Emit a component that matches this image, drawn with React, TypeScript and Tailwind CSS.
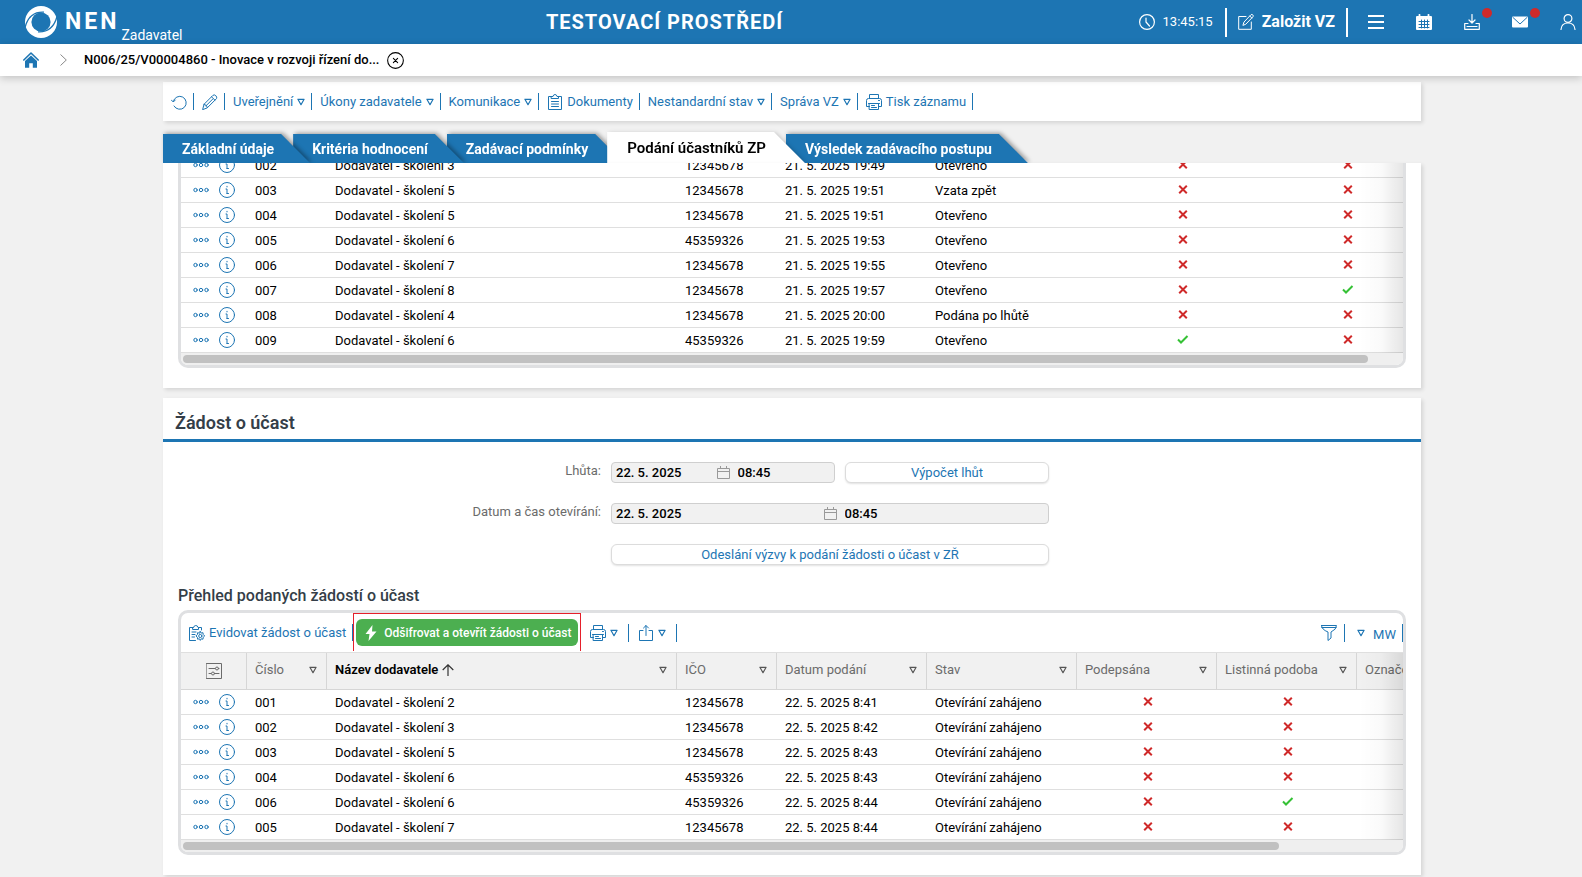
import type { ReactNode } from 'react';
import clsx from 'clsx';

interface Submission {
  no: string;
  supplier: string;
  ico: string;
  date: string;
  state: string;
  signed: boolean;
  paper: boolean;
}

const PRELIMINARY: Submission[] = [
  { no: '002', supplier: 'Dodavatel - školení 3', ico: '12345678', date: '21. 5. 2025 19:49', state: 'Otevřeno', signed: false, paper: false },
  { no: '003', supplier: 'Dodavatel - školení 5', ico: '12345678', date: '21. 5. 2025 19:51', state: 'Vzata zpět', signed: false, paper: false },
  { no: '004', supplier: 'Dodavatel - školení 5', ico: '12345678', date: '21. 5. 2025 19:51', state: 'Otevřeno', signed: false, paper: false },
  { no: '005', supplier: 'Dodavatel - školení 6', ico: '45359326', date: '21. 5. 2025 19:53', state: 'Otevřeno', signed: false, paper: false },
  { no: '006', supplier: 'Dodavatel - školení 7', ico: '12345678', date: '21. 5. 2025 19:55', state: 'Otevřeno', signed: false, paper: false },
  { no: '007', supplier: 'Dodavatel - školení 8', ico: '12345678', date: '21. 5. 2025 19:57', state: 'Otevřeno', signed: false, paper: true },
  { no: '008', supplier: 'Dodavatel - školení 4', ico: '12345678', date: '21. 5. 2025 20:00', state: 'Podána po lhůtě', signed: false, paper: false },
  { no: '009', supplier: 'Dodavatel - školení 6', ico: '45359326', date: '21. 5. 2025 19:59', state: 'Otevřeno', signed: true, paper: false },
];

const REQUESTS: Submission[] = [
  { no: '001', supplier: 'Dodavatel - školení 2', ico: '12345678', date: '22. 5. 2025 8:41', state: 'Otevírání zahájeno', signed: false, paper: false },
  { no: '002', supplier: 'Dodavatel - školení 3', ico: '12345678', date: '22. 5. 2025 8:42', state: 'Otevírání zahájeno', signed: false, paper: false },
  { no: '003', supplier: 'Dodavatel - školení 5', ico: '12345678', date: '22. 5. 2025 8:43', state: 'Otevírání zahájeno', signed: false, paper: false },
  { no: '004', supplier: 'Dodavatel - školení 6', ico: '45359326', date: '22. 5. 2025 8:43', state: 'Otevírání zahájeno', signed: false, paper: false },
  { no: '006', supplier: 'Dodavatel - školení 6', ico: '45359326', date: '22. 5. 2025 8:44', state: 'Otevírání zahájeno', signed: false, paper: true },
  { no: '005', supplier: 'Dodavatel - školení 7', ico: '12345678', date: '22. 5. 2025 8:44', state: 'Otevírání zahájeno', signed: false, paper: false },
];

const HEADERS = ['Číslo', 'Název dodavatele', 'IČO', 'Datum podání', 'Stav', 'Podepsána', 'Listinná podoba', 'Označení'];

interface IconProps {
  children: ReactNode;
  className?: string;
}

function Icon({ children, className }: IconProps) {
  return (
    <svg
      viewBox="0 0 16 16"
      width="16"
      height="16"
      fill="none"
      stroke="currentColor"
      strokeLinecap="round"
      strokeLinejoin="round"
      className={clsx('shrink-0', className)}
      aria-hidden="true"
    >
      {children}
    </svg>
  );
}

function Logo() {
  return (
    <svg viewBox="0 0 32 32" width="32" height="32" className="shrink-0" aria-hidden="true">
      <circle cx="16" cy="16" r="16" fill="#fff" />
      <circle cx="16" cy="16" r="9.6" fill="#1d75b3" />
      <path d="M0 21.5C2.5 12 8.500 5.500 19 6.200" fill="none" stroke="#1d75b3" strokeWidth="1.300" />
      <path d="M32 10.500C29.500 20 23.500 26.500 13 25.800" fill="none" stroke="#1d75b3" strokeWidth="1.300" />
    </svg>
  );
}

function Triangle({ className }: { className?: string }) {
  return (
    <svg viewBox="0 0 8 8" width="8" height="8" fill="none" stroke="currentColor" strokeWidth="1.200" strokeLinejoin="round" className={clsx('shrink-0', className)} aria-hidden="true">
      <path d="M.9 1.300h6.200L4 6.700z" />
    </svg>
  );
}

function PrinterIcon() {
  return (
    <Icon>
      <path d="M3.500 4.500v-4h9v4M3.500 12.500h-3v-6q0-2 2-2h11q2 0 2 2v6h-3M3.500 9.500h9v6h-9zM2.500 9.500h11M5.500 11.500h3M5.500 13.500h5M12.500 6.500h1" />
    </Icon>
  );
}

function Mark({ ok }: { ok: boolean }) {
  return ok ? (
    <svg viewBox="0 0 12 9" width="12" height="9" fill="none" stroke="#35c135" strokeWidth="2" className="mx-auto block" role="img" aria-label="Ano">
      <path d="M1 4.500l3 3L10.500 1" />
    </svg>
  ) : (
    <svg viewBox="0 0 10 9" width="10" height="9" fill="none" stroke="#cf2a2a" strokeWidth="2" className="mx-auto block" role="img" aria-label="Ne">
      <path d="M1.200.8l7.600 7.400M8.800.8L1.200 8.200" />
    </svg>
  );
}

function ToolItem({ label, icon, menu }: { label?: string; icon?: ReactNode; menu?: boolean }) {
  return (
    <li className="flex h-[17px] items-center border-r border-[#1d75b3] pr-[6px] pl-2">
      <button type="button" className="flex items-center gap-1 whitespace-nowrap">
        {icon}
        {label}
        {menu && <Triangle />}
      </button>
    </li>
  );
}

function Tab({ label, active, className }: { label: string; active?: boolean; className?: string }) {
  return (
    <div
      className={clsx(
        'relative',
        active ? 'drop-shadow-[2px_1px_2px_rgba(0,0,0,0.2)]' : 'drop-shadow-[2px_-1px_2px_rgba(0,0,0,0.35)]',
        className,
      )}
    >
      <button
        type="button"
        role="tab"
        aria-selected={!!active}
        className={clsx(
          'block whitespace-nowrap',
          active
            ? 'h-[31px] bg-white pr-[39px] pl-5 text-[15px] font-semibold text-black [clip-path:polygon(0_0,calc(100%-31px)_0,100%_100%,0_100%)]'
            : 'h-[29px] bg-[#1d75b3] pr-9 pl-[19px] text-sm font-bold text-white [clip-path:polygon(0_0,calc(100%-29px)_0,100%_100%,0_100%)]',
        )}
      >
        {label}
      </button>
    </div>
  );
}

function Row({ item }: { item: Submission }) {
  const textCell = 'p-0 pt-[2px] pl-2';
  return (
    <tr className="h-[25px] [&>td]:border-b [&>td]:border-[#dfdfdf]">
      <td className="p-0">
        <div className="flex items-center gap-[10px] pl-3 text-[#1d75b3]">
          <button type="button" aria-label="Další akce">
            <Icon>
              <circle cx="2.500" cy="8" r="1.700" />
              <circle cx="8" cy="8" r="1.700" />
              <circle cx="13.500" cy="8" r="1.700" />
            </Icon>
          </button>
          <button type="button" aria-label="Detail">
            <Icon>
              <circle cx="8" cy="8" r="7.500" />
              <path d="M8 4.300v.6M7 7h1v4.500M8 11.500h1.500" />
            </Icon>
          </button>
        </div>
      </td>
      <td className={textCell}>{item.no}</td>
      <td className={textCell}>{item.supplier}</td>
      <td className={textCell}>{item.ico}</td>
      <td className={textCell}>{item.date}</td>
      <td className={textCell}>{item.state}</td>
      <td className="p-0 pb-[2px] pl-px"><Mark ok={item.signed} /></td>
      <td className="p-0 pb-[2px] pl-px"><Mark ok={item.paper} /></td>
      <td className="p-0" />
    </tr>
  );
}

function DateField({ id, label }: { id: string; label: string }) {
  const inputClass = 'h-[19px] w-full min-w-0 bg-transparent font-medium text-black outline-none';
  return (
    <div className="grid h-[21px] flex-1 grid-cols-[1fr_13px_1fr] items-center rounded border border-[#cfcfcf] bg-[#f1f1f1]">
      <input id={id} defaultValue="22. 5. 2025" readOnly className={clsx(inputClass, 'pl-1')} />
      <svg viewBox="0 0 13 13" width="13" height="13" fill="none" stroke="#999" aria-hidden="true">
        <path d="M.5 2.500h12v10H.5zM.5 5.500h12M3.500 0v3M9.500 0v3" />
      </svg>
      <input aria-label={`${label} – čas`} defaultValue="08:45" readOnly className={clsx(inputClass, 'pl-2')} />
    </div>
  );
}

export default function App() {
  const outlineButton = 'h-[21px] rounded-md border border-[#dcdcdc] bg-white text-[#1d75b3] shadow-[0_1px_2px_rgba(0,0,0,0.12)]';
  const card = 'bg-white shadow-[2px_2px_4px_rgba(0,0,0,0.12)]';
  const tableClass = 'w-full table-fixed border-separate border-spacing-0';
  const fade = 'pointer-events-none absolute right-0 bottom-3 w-11 bg-linear-to-r from-transparent via-black/[0.02] to-black/10';

  return (
    <div className="min-h-screen overflow-hidden bg-[#f1f1f1] font-['Roboto',sans-serif] text-[13px] leading-4 text-black">
      <header className="flex h-11 items-center bg-[#1d75b3] text-white">
        <div className="flex h-full items-center pl-[25px]">
          <Logo />
          <span className="pl-2 text-[23px] leading-7 font-bold tracking-[3px]">NEN</span>
          <span className="self-end pb-px pl-[2px] text-sm leading-4">Zadavatel</span>
        </div>
        <h1 className="flex-1 pl-2 text-center text-xl font-bold tracking-[1px]">TESTOVACÍ PROSTŘEDÍ</h1>
        <div className="flex items-center justify-end pr-[6px]">
          <Icon className="mr-2">
            <circle cx="8" cy="8" r="7.400" strokeWidth="1.200" />
            <path d="M7 4v4l3.500 4" strokeWidth="1.200" />
          </Icon>
          <time>13:45:15</time>
          <button type="button" className="mr-5 ml-3 flex h-[29px] items-center gap-2 border-x-2 border-white px-[11px] text-base font-bold">
            <Icon>
              <path d="M8 2.500H.7v12.800h12.600V8M5 11l1-3 7-7.300q1-.6 1.800.2t.2 1.800L8 10zM11.800 2l2 2" />
            </Icon>
            Založit VZ
          </button>
          <div className="flex gap-8">
            <button type="button" aria-label="Nabídka">
              <Icon>
                <path d="M0 2h16M0 8h16M0 14h16" strokeWidth="2" strokeLinecap="butt" />
              </Icon>
            </button>
            <button type="button" aria-label="Kalendář">
              <Icon>
                <path d="M1 3h14v12H1z" fill="#fff" strokeWidth="2" />
                <path d="M3.500.8v2M12.500.8v2" strokeWidth="1.800" />
                <path d="M3 7.500h10M3 10.500h10M3 13.500h10M5.500 6v8M8.500 6v8M11.500 6v8" stroke="#1d75b3" />
              </Icon>
            </button>
            <button type="button" aria-label="Stažené soubory" className="relative">
              <Icon>
                <path d="M8 .5v8M5 6l3 3 3-3M4 9.500H.7v5.800h14.600V9.500H12M3 12.500h10" strokeWidth="1.200" />
              </Icon>
              <span className="absolute -top-[6px] -right-3 size-[10px] rounded-full bg-[#cf2a2a]" />
            </button>
            <button type="button" aria-label="Zprávy" className="relative">
              <Icon>
                <rect x="0" y="2.500" width="16" height="11" rx="1" fill="#fff" stroke="none" />
                <path d="M1 3.500l7 6.500 7-6.500" stroke="#1d75b3" />
              </Icon>
              <span className="absolute -top-[6px] -right-3 size-[10px] rounded-full bg-[#cf2a2a]" />
            </button>
            <button type="button" aria-label="Uživatel">
              <Icon>
                <circle cx="8" cy="4.500" r="3.900" strokeWidth="1.200" />
                <path d="M1 15.500q.5-6.500 7-6.500t7 6.500" strokeWidth="1.200" />
              </Icon>
            </button>
          </div>
        </div>
      </header>

      <nav className="relative flex h-8 items-center bg-white pl-[23px] shadow-[0_2px_8px_rgba(0,0,0,0.2)]">
        <a href="#" aria-label="Domů" className="mr-[21px] text-[#1d75b3]">
          <Icon>
            <path d="M.8 8L8 1l7.200 7" strokeWidth="1.600" />
            <path d="M2 9l6-5.500L14 9v6.700H9.800v-4.400H6.200v4.400H2z" fill="currentColor" stroke="none" />
          </Icon>
        </a>
        <svg viewBox="0 0 7 12" width="7" height="12" fill="none" stroke="#8a8a8a" className="mr-[17px]" aria-hidden="true">
          <path d="M.5.5L6.300 6 .5 11.500" />
        </svg>
        <a href="#" className="font-medium">N006/25/V00004860 - Inovace v rozvoji řízení do...</a>
        <button type="button" aria-label="Zavřít" className="ml-2">
          <Icon className="size-[17px]">
            <circle cx="8" cy="8" r="7.400" />
            <path d="M6 6l4 4M10 6l-4 4" />
          </Icon>
        </button>
      </nav>

      <main className="mr-[161px] ml-[163px] pt-[6px] pb-[2px]">
        <ul className={clsx(card, 'flex h-[39px] items-center text-[#1d75b3]')}>
          <ToolItem
            icon={
              <Icon>
                <path d="M2.300 7.500a6.500 6.500 0 1 1 .7 4.500M.3 6l2 2 2-2" />
              </Icon>
            }
          />
          <ToolItem
            icon={
              <Icon>
                <path d="M.7 15.300l1.300-5L11 1.300q1.300-1 2.800.4t.7 2.900l-9 9zM2 10.300q2.800.2 3.500 3.300M9.500 2.800l3.500 3.400M3.800 12l7-7" />
              </Icon>
            }
          />
          <ToolItem label="Uveřejnění" menu />
          <ToolItem label="Úkony zadavatele" menu />
          <ToolItem label="Komunikace" menu />
          <ToolItem
            label="Dokumenty"
            icon={
              <Icon>
                <path d="M4.500 2.500h-3v13h13v-13h-3M4.500 4.500h7v-2H10q-.3-2-2-2t-2 2H4.500zM4.500 7.500h7M4.500 10h7M4.500 12.500h7" />
              </Icon>
            }
          />
          <ToolItem label="Nestandardní stav" menu />
          <ToolItem label="Správa VZ" menu />
          <ToolItem label="Tisk záznamu" icon={<PrinterIcon />} />
        </ul>

        <div role="tablist" className="mt-[11px] flex items-end">
          <Tab label="Základní údaje" className="z-30" />
          <Tab label="Kritéria hodnocení" className="z-20 -ml-[17px]" />
          <Tab label="Zadávací podmínky" className="z-10 -ml-[17px]" />
          <Tab label="Podání účastníků ZP" active className="z-40 -ml-[17px]" />
          <Tab label="Výsledek zadávacího postupu" className="-ml-[19px]" />
        </div>

        <section className={clsx(card, 'relative z-50 overflow-hidden px-[15px] pb-5')}>
          <div className="relative -mt-[10px] overflow-hidden rounded-b-[10px] border-x-[3px] border-b-[3px] border-[#dfe0e2]">
            <table className={clsx(tableClass, 'min-w-[1226px]')}>
              <colgroup>
                <col className="w-[66px]" />
                <col className="w-[80px]" />
                <col />
                <col className="w-[100px]" />
                <col className="w-[150px]" />
                <col className="w-[150px]" />
                <col className="w-[210px]" />
                <col className="w-[120px]" />
                <col className="w-0" />
              </colgroup>
              <tbody>
                {PRELIMINARY.map((item) => <Row key={item.no} item={item} />)}
              </tbody>
            </table>
            <div className="flex h-3 items-center bg-[#efefef] px-[2px]">
              <div className="h-2 w-[calc(100%-33px)] rounded-full bg-[#c1c1c1]" />
            </div>
            <div className={clsx(fade, 'top-0')} />
          </div>
        </section>

        <section className={clsx(card, 'mt-[10px] pb-5')}>
          <h2 className="border-b-[3px] border-[#1d75b3] px-3 pt-[13px] pb-1 text-lg leading-6 font-semibold text-[#343e48]">Žádost o účast</h2>

          <form className="grid grid-cols-[438fr_438fr_362fr] gap-x-[10px] gap-y-5 pt-5">
            <label htmlFor="deadline" className="pt-px text-right text-[#6b6b6b]">Lhůta:</label>
            <div className="flex gap-[10px]">
              <DateField id="deadline" label="Lhůta" />
              <button type="button" className={clsx(outlineButton, 'w-[204px]')}>Výpočet lhůt</button>
            </div>
            <label htmlFor="opening" className="col-start-1 pt-px text-right text-[#6b6b6b]">Datum a čas otevírání:</label>
            <DateField id="opening" label="Datum a čas otevírání" />
            <button type="button" className={clsx(outlineButton, 'col-start-2')}>Odeslání výzvy k podání žádosti o účast v ZŘ</button>
          </form>

          <h3 className="px-[15px] pt-[21px] pb-1 text-base leading-5 font-medium text-[#343e48]">Přehled podaných žádostí o účast</h3>

          <div className="relative mx-[15px] overflow-hidden rounded-[10px] border-[3px] border-[#dfe0e2]">
            <div className="flex h-10 items-center border-b border-[#dfdfdf] text-[#1d75b3]">
              <ul>
                <ToolItem
                  label="Evidovat žádost o účast"
                  icon={
                    <Icon>
                      <path d="M4 2.500H.5v13h6M4 4.500h5.500v-2H9q-.3-2-2.200-2t-2.200 2H4zM9.500 2.500h3V5M3 7h4M3 9.500h3M3 12h2.500" />
                      <circle cx="11.300" cy="11" r="1.600" />
                      <path d="M11.300 6.500l.9 1.600 1.800-.4.200 1.800 1.500 1.500-1.500 1.300-.2 1.900-1.800-.4-.9 1.600-.9-1.600-1.800.4-.2-1.900L6.900 11l1.500-1.500.2-1.800 1.800.4z" />
                    </Icon>
                  }
                />
              </ul>
              <div className="h-[38px] self-start border-x border-t border-[#e5202b] px-[2px] pt-[5px]">
                <button type="button" className="flex h-[27px] items-center gap-[5px] rounded-md bg-[#4caf50] px-[7px] text-xs font-medium whitespace-nowrap text-white">
                  <svg viewBox="0 0 16 16" width="16" height="16" fill="currentColor" className="shrink-0" aria-hidden="true">
                    <path d="M9.500 0L2.500 9h4L5.500 16l8-9.500H9z" />
                  </svg>
                  Odšifrovat a otevřít žádosti o účast
                </button>
              </div>
              <ul className="flex items-center">
                <li className="flex h-[18px] items-center border-r border-[#1d75b3] pr-[10px] pl-[9px]">
                  <button type="button" aria-label="Tisk" className="flex items-center gap-1">
                    <PrinterIcon />
                    <Triangle />
                  </button>
                </li>
                <li className="flex h-[18px] items-center border-r border-[#1d75b3] pr-[10px] pl-[9px]">
                  <button type="button" aria-label="Export" className="flex items-center gap-1">
                    <Icon>
                      <path d="M5 5.500H1.500v10h13v-10H11M8 10.500V.7M5.500 3L8 .5 10.500 3" />
                    </Icon>
                    <Triangle />
                  </button>
                </li>
              </ul>
              <ul className="ml-auto flex items-center">
                <li className="flex h-[18px] items-center border-r border-[#1d75b3] pr-[7px]">
                  <button type="button" aria-label="Filtr">
                    <Icon>
                      <path d="M.5.500h15q0 4-5.500 6.500v6L7 15.500V7Q.5 4.500.5.500zM.8 2.500h14.400" />
                    </Icon>
                  </button>
                </li>
                <li className="flex h-[18px] items-center border-r border-[#1d75b3] pr-[6px] pl-3">
                  <button type="button" className="flex items-center gap-2">
                    <Triangle />
                    <span className="pt-1">MW</span>
                  </button>
                </li>
              </ul>
            </div>
            <table className={clsx(tableClass, 'min-w-[1222px]')}>
              <colgroup>
                <col className="w-[66px]" />
                <col className="w-[80px]" />
                <col />
                <col className="w-[100px]" />
                <col className="w-[150px]" />
                <col className="w-[150px]" />
                <col className="w-[140px]" />
                <col className="w-[140px]" />
                <col className="w-[46px]" />
              </colgroup>
              <thead>
                <tr className="h-[37px] bg-[#f1f1f1] text-left text-[#6b6b6b]">
                  <th className="border-r border-b border-[#d6d6d6] p-0">
                    <button type="button" aria-label="Nastavení sloupců" className="mx-auto block">
                      <Icon>
                        <path d="M.5.500h15v15H.5zM3 5.500h6M3 10.500h2M9 10.500h4M12.500 5.500h.5" />
                        <circle cx="11" cy="5.500" r="1.500" />
                        <circle cx="7" cy="10.500" r="1.500" />
                      </Icon>
                    </button>
                  </th>
                  {HEADERS.map((name) => (
                    <th
                      key={name}
                      className={clsx(
                        'border-b border-[#d6d6d6] p-0 pr-[9px] pb-[2px] pl-2',
                        name !== 'Označení' && 'border-r',
                        name === 'Název dodavatele' ? 'font-semibold text-black' : 'font-normal',
                      )}
                    >
                      <div className="flex items-center justify-between whitespace-nowrap">
                        <span className="flex items-center gap-1">
                          {name}
                          {name === 'Název dodavatele' && (
                            <svg viewBox="0 0 12 12" width="12" height="12" fill="none" stroke="#333" strokeWidth="1.200" aria-hidden="true">
                              <path d="M6 12V.8M.7 6L6 .8 11.300 6" />
                            </svg>
                          )}
                        </span>
                        {name !== 'Označení' && <Triangle className="text-[#555]" />}
                      </div>
                    </th>
                  ))}
                </tr>
              </thead>
              <tbody>
                {REQUESTS.map((item) => <Row key={item.no} item={item} />)}
              </tbody>
            </table>
            <div className="flex h-3 items-center bg-[#efefef] px-[2px]">
              <div className="h-2 w-[90%] rounded-full bg-[#c1c1c1]" />
            </div>
            <div className={clsx(fade, 'top-10')} />
          </div>
        </section>
      </main>
    </div>
  );
}
